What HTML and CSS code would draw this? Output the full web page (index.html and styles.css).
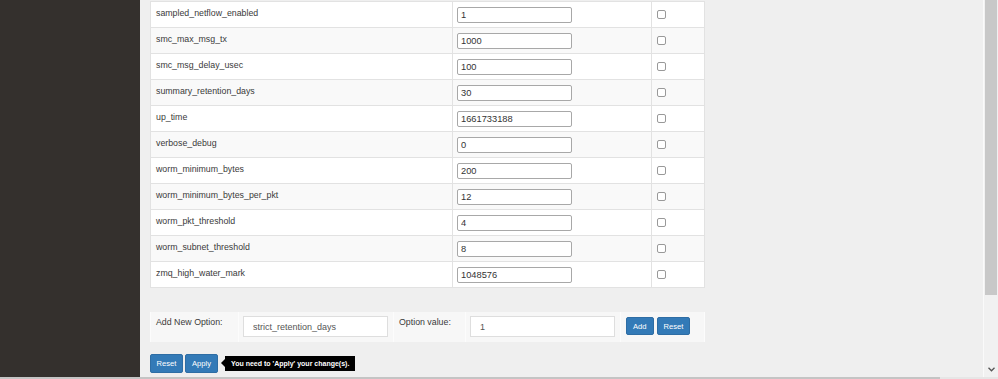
FILE: index.html
```html
<!DOCTYPE html>
<html>
<head>
    <link rel="stylesheet" href="styles.css">
</head>
<body>
    <div class="frame">
        <aside class="sidebar"></aside>

        <main class="content">
            <!-- Option list -->
            <table class="options">
                <tr><td class="name">sampled_netflow_enabled</td><td class="value"><input type="text" value="1"></td><td class="check"><input type="checkbox"></td></tr>
                <tr><td class="name">smc_max_msg_tx</td><td class="value"><input type="text" value="1000"></td><td class="check"><input type="checkbox"></td></tr>
                <tr><td class="name">smc_msg_delay_usec</td><td class="value"><input type="text" value="100"></td><td class="check"><input type="checkbox"></td></tr>
                <tr><td class="name">summary_retention_days</td><td class="value"><input type="text" value="30"></td><td class="check"><input type="checkbox"></td></tr>
                <tr><td class="name">up_time</td><td class="value"><input type="text" value="1661733188"></td><td class="check"><input type="checkbox"></td></tr>
                <tr><td class="name">verbose_debug</td><td class="value"><input type="text" value="0"></td><td class="check"><input type="checkbox"></td></tr>
                <tr><td class="name">worm_minimum_bytes</td><td class="value"><input type="text" value="200"></td><td class="check"><input type="checkbox"></td></tr>
                <tr><td class="name">worm_minimum_bytes_per_pkt</td><td class="value"><input type="text" value="12"></td><td class="check"><input type="checkbox"></td></tr>
                <tr><td class="name">worm_pkt_threshold</td><td class="value"><input type="text" value="4"></td><td class="check"><input type="checkbox"></td></tr>
                <tr><td class="name">worm_subnet_threshold</td><td class="value"><input type="text" value="8"></td><td class="check"><input type="checkbox"></td></tr>
                <tr><td class="name">zmq_high_water_mark</td><td class="value"><input type="text" value="1048576"></td><td class="check"><input type="checkbox"></td></tr>
            </table>

            <!-- Add new option -->
            <table class="add-option">
                <tr>
                    <td class="label label-wide">Add New Option:</td>
                    <td class="field"><input type="text" value="strict_retention_days"></td>
                    <td class="label label-narrow">Option value:</td>
                    <td class="field"><input type="text" value="1"></td>
                    <td class="actions">
                        <div class="action-buttons">
                            <button class="btn">Add</button>
                            <button class="btn">Reset</button>
                        </div>
                    </td>
                </tr>
            </table>

            <div class="footer-actions">
                <button class="btn btn-large">Reset</button>
                <button class="btn btn-large">Apply</button>
                <span class="tip">You need to 'Apply' your change(s).</span>
            </div>
        </main>

        <div class="vscroll">
            <div class="vthumb"></div>
            <svg class="arrow" width="7" height="5" viewBox="0 0 7 5">
                <path d="M0.5 0.8 L3.5 3.8 L6.5 0.8" fill="none" stroke="#555" stroke-width="1.3"/>
            </svg>
        </div>
    </div>
    <div class="hscroll"><div class="hthumb"></div></div>
</body>
</html>
```

FILE: styles.css
```css
body {
    margin: 0;
    padding: 0;
    font-family: "Liberation Sans", Arial, sans-serif;
    background-color: #f0f0f0;
    width: 998px;
    height: 379px;
    overflow: hidden;
}

.frame {
    display: grid;
    grid-template-columns: 140px 843px 15px;
    height: 377px;
}

.sidebar {
    background-color: #34302d;
}

.content {
    padding: 1px 0 0 10px;
    background-color: #efefef;
}

/* option table */
.options {
    border-collapse: collapse;
    table-layout: fixed;
    width: 555px;
    background-color: #fff;
}

.options tr:nth-child(even) {
    background-color: #f9f9f9;
}

.options td {
    border: 1px solid #e2e2e2;
    padding: 5px 5px 4px;
    vertical-align: top;
}

.options .name {
    width: 291px;
    color: #3a3a3a;
    font-size: 8.8px;
    line-height: 13px;
}

.options .value {
    width: 189px;
    padding-left: 4px;
}

.options .value input {
    box-sizing: border-box;
    display: block;
    width: 115px;
    height: 16px;
    margin: 0;
    padding: 0 3px;
    border: 1px solid #a8a8a8;
    border-radius: 2px;
    font-family: "Liberation Sans", Arial, sans-serif;
    font-size: 9.3px;
    color: #333;
    background-color: #fff;
}

.options .check input {
    appearance: none;
    display: block;
    width: 9px;
    height: 9px;
    margin: 3px 0 0 0;
    border: 1px solid #999;
    border-radius: 2px;
    background-color: #fff;
    box-sizing: border-box;
}

/* add new option */
.add-option {
    margin-top: 24px;
    border-collapse: collapse;
    table-layout: fixed;
    width: 555px;
    background-color: #f7f7f7;
}

.add-option td {
    border-left: 1px solid #fcfcfc;
    border-right: 1px solid #fcfcfc;
    padding: 4px 5px 5px 4px;
    vertical-align: top;
}

.add-option .label {
    color: #3a3a3a;
    font-size: 8.8px;
    line-height: 13px;
    padding: 4px 5px 5px;
}

.add-option .label-wide {
    width: 77px;
}

.add-option .label-narrow {
    width: 61px;
}

.add-option .field {
    width: 145px;
}

.add-option .field input {
    box-sizing: border-box;
    display: block;
    width: 145px;
    height: 21px;
    margin: 0;
    padding: 0 9px;
    border: 1px solid #dedede;
    font-family: "Liberation Sans", Arial, sans-serif;
    font-size: 9px;
    color: #555;
    background-color: #fff;
}

.add-option .actions {
    padding: 5px 5px 5px 5px;
}

.action-buttons {
    display: flex;
    gap: 3px;
}

.btn {
    height: 18px;
    padding: 0 6px;
    border: 1px solid #2e6da4;
    border-radius: 2px;
    background-color: #337ab7;
    color: #fff;
    font-family: "Liberation Sans", Arial, sans-serif;
    font-size: 7.6px;
    cursor: pointer;
}

.btn-large {
    height: 19px;
    width: 33px;
    padding: 0;
}

.footer-actions {
    margin-top: 12px;
    display: flex;
    align-items: center;
    gap: 2px;
}

.tip {
    position: relative;
    margin-left: 5px;
    padding: 0 6px;
    height: 15px;
    line-height: 15px;
    background-color: #000;
    color: #fff;
    font-size: 7px;
    font-weight: bold;
    white-space: nowrap;
}

.tip::before {
    content: "";
    position: absolute;
    left: -4px;
    top: 3px;
    border-top: 4px solid transparent;
    border-bottom: 4px solid transparent;
    border-right: 4px solid #000;
}

/* fake scrollbars */
.vscroll {
    border-left: 1px solid #fafafa;
    background-color: #f1f1f1;
    display: flex;
    flex-direction: column;
    align-items: center;
}

.vthumb {
    width: 12px;
    height: 295px;
    background-color: #c8c8c8;
}

.arrow {
    margin-top: auto;
    margin-bottom: 5px;
}

.hscroll {
    height: 2px;
    background-color: #e6e6e6;
}

.hthumb {
    width: 940px;
    height: 2px;
    background-color: #c4c4c4;
}
```
